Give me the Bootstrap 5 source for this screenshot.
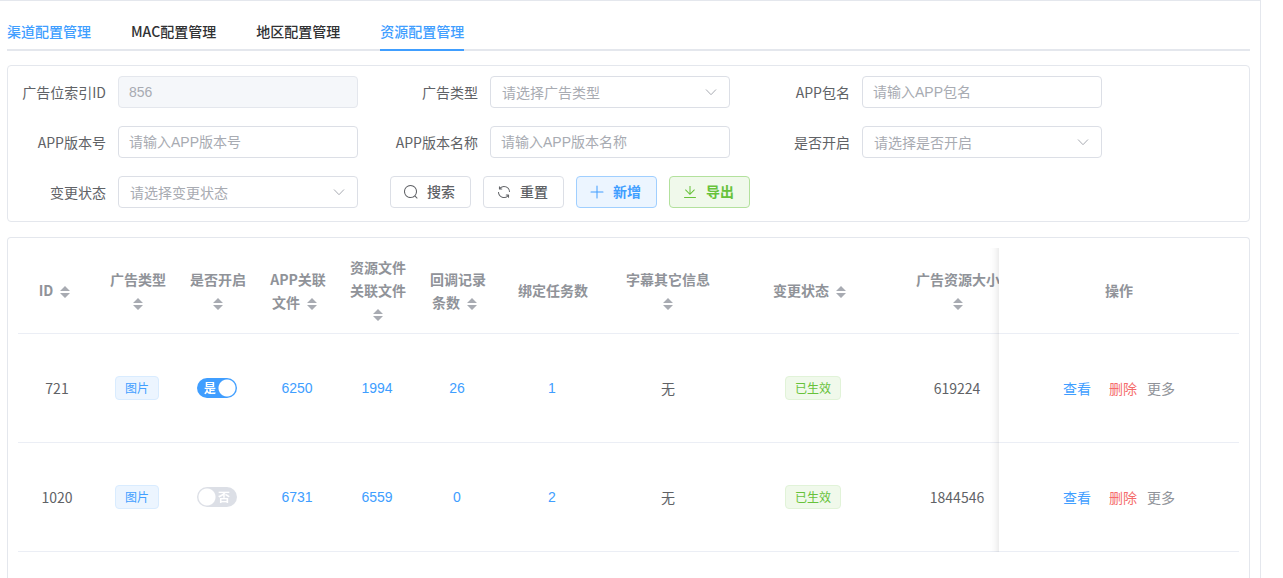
<!DOCTYPE html>
<html lang="zh-CN">
<head>
<meta charset="utf-8">
<meta name="viewport" content="width=device-width, initial-scale=1">
<title>资源配置管理</title>
<link href="https://cdn.jsdelivr.net/npm/bootstrap@5.3.0/dist/css/bootstrap.min.css" rel="stylesheet">
<style>
  :root { --blue: #409eff; --green: #67c23a; --red: #f56c6c; --line: #e4e7ed; --field: #dcdfe6; --hint: #a8abb2; --muted: #909399; --ink: #606266; }
  body { font-family: "Noto Sans CJK SC", sans-serif; font-size: 14px; line-height: 23px; color: var(--ink); padding-right: 22px; }
  a { color: var(--blue); text-decoration: none; }
  .page-box { border: solid var(--line); border-width: 1px 1px 0 0; padding: 11px 10px 0 7px; }
  .tab-bar { border-bottom: 2px solid var(--line); gap: 40px; margin-bottom: 14px; }
  .tab-bar .nav-link { padding: 0; height: 39px; line-height: 38px; margin-bottom: -2px; color: #303133; font-weight: 500; border-bottom: 2px solid transparent; border-radius: 0; }
  .tab-bar .nav-link.crumb { color: var(--blue); }
  .tab-bar .nav-link.active { color: var(--blue); border-bottom-color: var(--blue); }
  .panel { border: 1px solid var(--line); border-radius: 4px; padding: 10px; }
  .filters { row-gap: 18px; padding-bottom: 13px; margin-bottom: 15px; }
  .field { width: 372px; padding-right: 32px; }
  .field label { width: 100px; padding-right: 12px; text-align: right; line-height: 32px; }
  .field .form-control, .field .form-select { flex: 1; min-width: 0; height: 32px; border: 1px solid var(--field); border-radius: 4px; padding: 0 10px; font-size: 14px; line-height: 30px; color: var(--hint); }
  .field .form-control { font-family: "Liberation Sans", "Noto Sans CJK SC", sans-serif; }
  .field .form-control::placeholder { color: var(--hint); }
  .field .form-control:disabled { background: #f5f7fa; border-color: var(--line); }
  .field .form-select { padding-left: 11px; background-size: 14px 14px; background-position: right 11px center;
    background-image: url("data:image/svg+xml,%3Csvg xmlns='http://www.w3.org/2000/svg' viewBox='0 0 14 14'%3E%3Cpath d='M2 4.5 7 9.7 12 4.5' fill='none' stroke='%23a8abb2'/%3E%3C/svg%3E"); }
  .tools { gap: 12px; }
  .tool-btn { height: 32px; padding: 0 15px 2px 12px; gap: 8px; font-size: 14px; font-weight: 500; line-height: 28px; color: var(--ink); border: 1px solid var(--field); border-radius: 4px; }
  .tool-btn svg { width: 16px; height: 16px; margin-top: 2px; fill: currentColor; }
  .tool-btn.add, .tool-btn.export { font-weight: 700; }
  .tool-btn.add { color: var(--blue); background: #ecf5ff; border-color: #a0cfff; }
  .tool-btn.export { color: var(--green); background: #f0f9eb; border-color: #b3e19d; }
  .grid-panel { border-bottom: 0; border-radius: 4px 4px 0 0; padding-bottom: 26px; }
  .grid-scroll { overflow-x: auto; scrollbar-width: none; }
  .grid-scroll::-webkit-scrollbar { display: none; }
  .grid { table-layout: fixed; width: 100%; min-width: 1240px; border-collapse: separate; border-spacing: 0; text-align: center; }
  .grid th, .grid td { border-bottom: 1px solid #ebeef5; padding: 8px 12px; vertical-align: middle; }
  .grid th { color: var(--muted); font-weight: 700; }
  .grid td { height: 109px; padding-right: 14px; }
  .grid td.pinned, .grid td.wide { padding-right: 12px; }
  .grid .num { font-family: "Liberation Sans", sans-serif; }
  .grid .pinned { position: sticky; right: 0; background: #fff; }
  .grid .pinned::before { content: ""; position: absolute; top: 0; bottom: -1px; left: -10px; width: 10px; box-shadow: inset -10px 0 10px -10px rgba(0,0,0,.15); pointer-events: none; }
  .sorter { display: inline-flex; width: 24px; height: 14px; border: 0; padding: 0; background: none; align-items: center; justify-content: center; vertical-align: middle; }
  .sorter svg { width: 10px; height: 12px; fill: #a8abb2; }
  .chip { display: block; width: fit-content; height: 24px; margin: 0 auto; padding: 0 9px; border: 1px solid #d9ecff; border-radius: 4px; background: #ecf5ff; color: var(--blue); font-size: 12px; line-height: 22px; }
  .chip.ok { border-color: #e1f3d8; background: #f0f9eb; color: var(--green); }
  .toggle { position: relative; display: block; width: 40px; height: 20px; margin: 0 auto; font-size: 12px; line-height: 20px; color: #fff; font-weight: 700; }
  .toggle input { appearance: none; display: block; width: 40px; height: 20px; margin: 0; border-radius: 10px; background: radial-gradient(circle at 10px 10px, #fff 8px, var(--field) 9px); }
  .toggle input:checked { background: radial-gradient(circle at 30px 10px, #fff 8px, var(--blue) 9px); }
  .toggle span { position: absolute; top: 0; right: 7px; }
  .toggle input:checked + span { right: auto; left: 7px; }
  .del { color: var(--red); margin-left: 18px; margin-right: 10px; }
  .more { color: var(--muted); }
</style>
</head>
<body>
<main class="page-box d-flex flex-column">
  <nav class="nav tab-bar">
    <a class="nav-link crumb" href="#">渠道配置管理</a>
    <a class="nav-link" href="#">MAC配置管理</a>
    <a class="nav-link" href="#">地区配置管理</a>
    <a class="nav-link active" href="#" aria-current="page">资源配置管理</a>
  </nav>

  <form class="panel filters d-flex flex-wrap">
    <div class="field d-flex"><label for="slot">广告位索引ID</label><input id="slot" class="form-control" value="856" disabled></div>
    <div class="field d-flex"><label for="adtype">广告类型</label><select id="adtype" class="form-select"><option>请选择广告类型</option></select></div>
    <div class="field d-flex"><label for="pkg">APP包名</label><input id="pkg" class="form-control" placeholder="请输入APP包名"></div>
    <div class="field d-flex"><label for="vercode">APP版本号</label><input id="vercode" class="form-control" placeholder="请输入APP版本号"></div>
    <div class="field d-flex"><label for="vername">APP版本名称</label><input id="vername" class="form-control" placeholder="请输入APP版本名称"></div>
    <div class="field d-flex"><label for="enabled">是否开启</label><select id="enabled" class="form-select"><option>请选择是否开启</option></select></div>
    <div class="field d-flex"><label for="state">变更状态</label><select id="state" class="form-select"><option>请选择变更状态</option></select></div>
    <div class="tools d-flex flex-wrap">
      <button type="button" class="btn tool-btn d-flex align-items-center"><svg viewBox="0 0 1024 1024"><path d="m795.904 750.72 124.992 124.928a32 32 0 0 1-45.248 45.248L750.656 795.904a416 416 0 1 1 45.248-45.248zM480 832a352 352 0 1 0 0-704 352 352 0 0 0 0 704z"/></svg>搜索</button>
      <button type="reset" class="btn tool-btn d-flex align-items-center"><svg viewBox="0 0 1024 1024"><path d="M771.776 794.88A384 384 0 0 1 128 512h64a320 320 0 0 0 555.712 216.448H654.72a32 32 0 1 1 0-64h149.056a32 32 0 0 1 32 32v148.928a32 32 0 1 1-64 0v-50.56zM276.288 295.616h92.992a32 32 0 0 1 0 64H220.16a32 32 0 0 1-32-32V178.56a32 32 0 0 1 64 0v50.56A384 384 0 0 1 896.128 512h-64a320 320 0 0 0-555.776-216.384z"/></svg>重置</button>
      <button type="button" class="btn tool-btn add d-flex align-items-center"><svg viewBox="0 0 1024 1024"><path d="M480 480V128a32 32 0 0 1 64 0v352h352a32 32 0 1 1 0 64H544v352a32 32 0 1 1-64 0V544H128a32 32 0 0 1 0-64h352z"/></svg>新增</button>
      <button type="button" class="btn tool-btn export d-flex align-items-center"><svg viewBox="0 0 1024 1024"><path d="M160 832h704a32 32 0 1 1 0 64H160a32 32 0 1 1 0-64zm384-253.696 236.288-236.352 45.248 45.248L508.8 704 192 387.2l45.248-45.248L480 584.704V128h64v450.304z"/></svg>导出</button>
    </div>
  </form>

  <section class="panel grid-panel">
    <svg class="d-none"><symbol id="carets" viewBox="0 0 10 12"><path d="M5 0 10 5H0zM0 7h10l-5 5z"/></symbol></svg>
    <div class="grid-scroll">
      <table class="grid">
        <colgroup>
          <col width="80"><col width="80"><col width="80"><col width="80"><col width="80"><col width="80">
          <col width="110"><col width="120"><col width="170"><col width="120"><col width="240">
        </colgroup>
        <thead>
          <tr>
            <th>ID<button class="sorter" aria-label="排序"><svg><use href="#carets"/></svg></button></th>
            <th>广告类型<button class="sorter" aria-label="排序"><svg><use href="#carets"/></svg></button></th>
            <th>是否开启<button class="sorter" aria-label="排序"><svg><use href="#carets"/></svg></button></th>
            <th>APP关联文件<button class="sorter" aria-label="排序"><svg><use href="#carets"/></svg></button></th>
            <th>资源文件关联文件<button class="sorter" aria-label="排序"><svg><use href="#carets"/></svg></button></th>
            <th>回调记录条数<button class="sorter" aria-label="排序"><svg><use href="#carets"/></svg></button></th>
            <th>绑定任务数</th>
            <th>字幕其它信息<button class="sorter" aria-label="排序"><svg><use href="#carets"/></svg></button></th>
            <th>变更状态<button class="sorter" aria-label="排序"><svg><use href="#carets"/></svg></button></th>
            <th>广告资源大小<button class="sorter" aria-label="排序"><svg><use href="#carets"/></svg></button></th>
            <th class="pinned">操作</th>
          </tr>
        </thead>
        <tbody>
          <tr>
            <td>721</td>
            <td><span class="chip">图片</span></td>
            <td><label class="toggle"><input type="checkbox" role="switch" checked><span>是</span></label></td>
            <td class="num"><a href="#">6250</a></td>
            <td class="num"><a href="#">1994</a></td>
            <td class="num"><a href="#">26</a></td>
            <td class="num"><a href="#">1</a></td>
            <td class="wide">无</td>
            <td class="wide"><span class="chip ok">已生效</span></td>
            <td>619224</td>
            <td class="pinned"><div class="d-flex justify-content-center"><a href="#">查看</a><a href="#" class="del">删除</a><a href="#" class="more">更多</a></div></td>
          </tr>
          <tr>
            <td>1020</td>
            <td><span class="chip">图片</span></td>
            <td><label class="toggle"><input type="checkbox" role="switch"><span>否</span></label></td>
            <td class="num"><a href="#">6731</a></td>
            <td class="num"><a href="#">6559</a></td>
            <td class="num"><a href="#">0</a></td>
            <td class="num"><a href="#">2</a></td>
            <td class="wide">无</td>
            <td class="wide"><span class="chip ok">已生效</span></td>
            <td>1844546</td>
            <td class="pinned"><div class="d-flex justify-content-center"><a href="#">查看</a><a href="#" class="del">删除</a><a href="#" class="more">更多</a></div></td>
          </tr>
        </tbody>
      </table>
    </div>
  </section>
</main>
<script src="https://cdn.jsdelivr.net/npm/bootstrap@5.3.0/dist/js/bootstrap.bundle.min.js"></script>
</body>
</html>
